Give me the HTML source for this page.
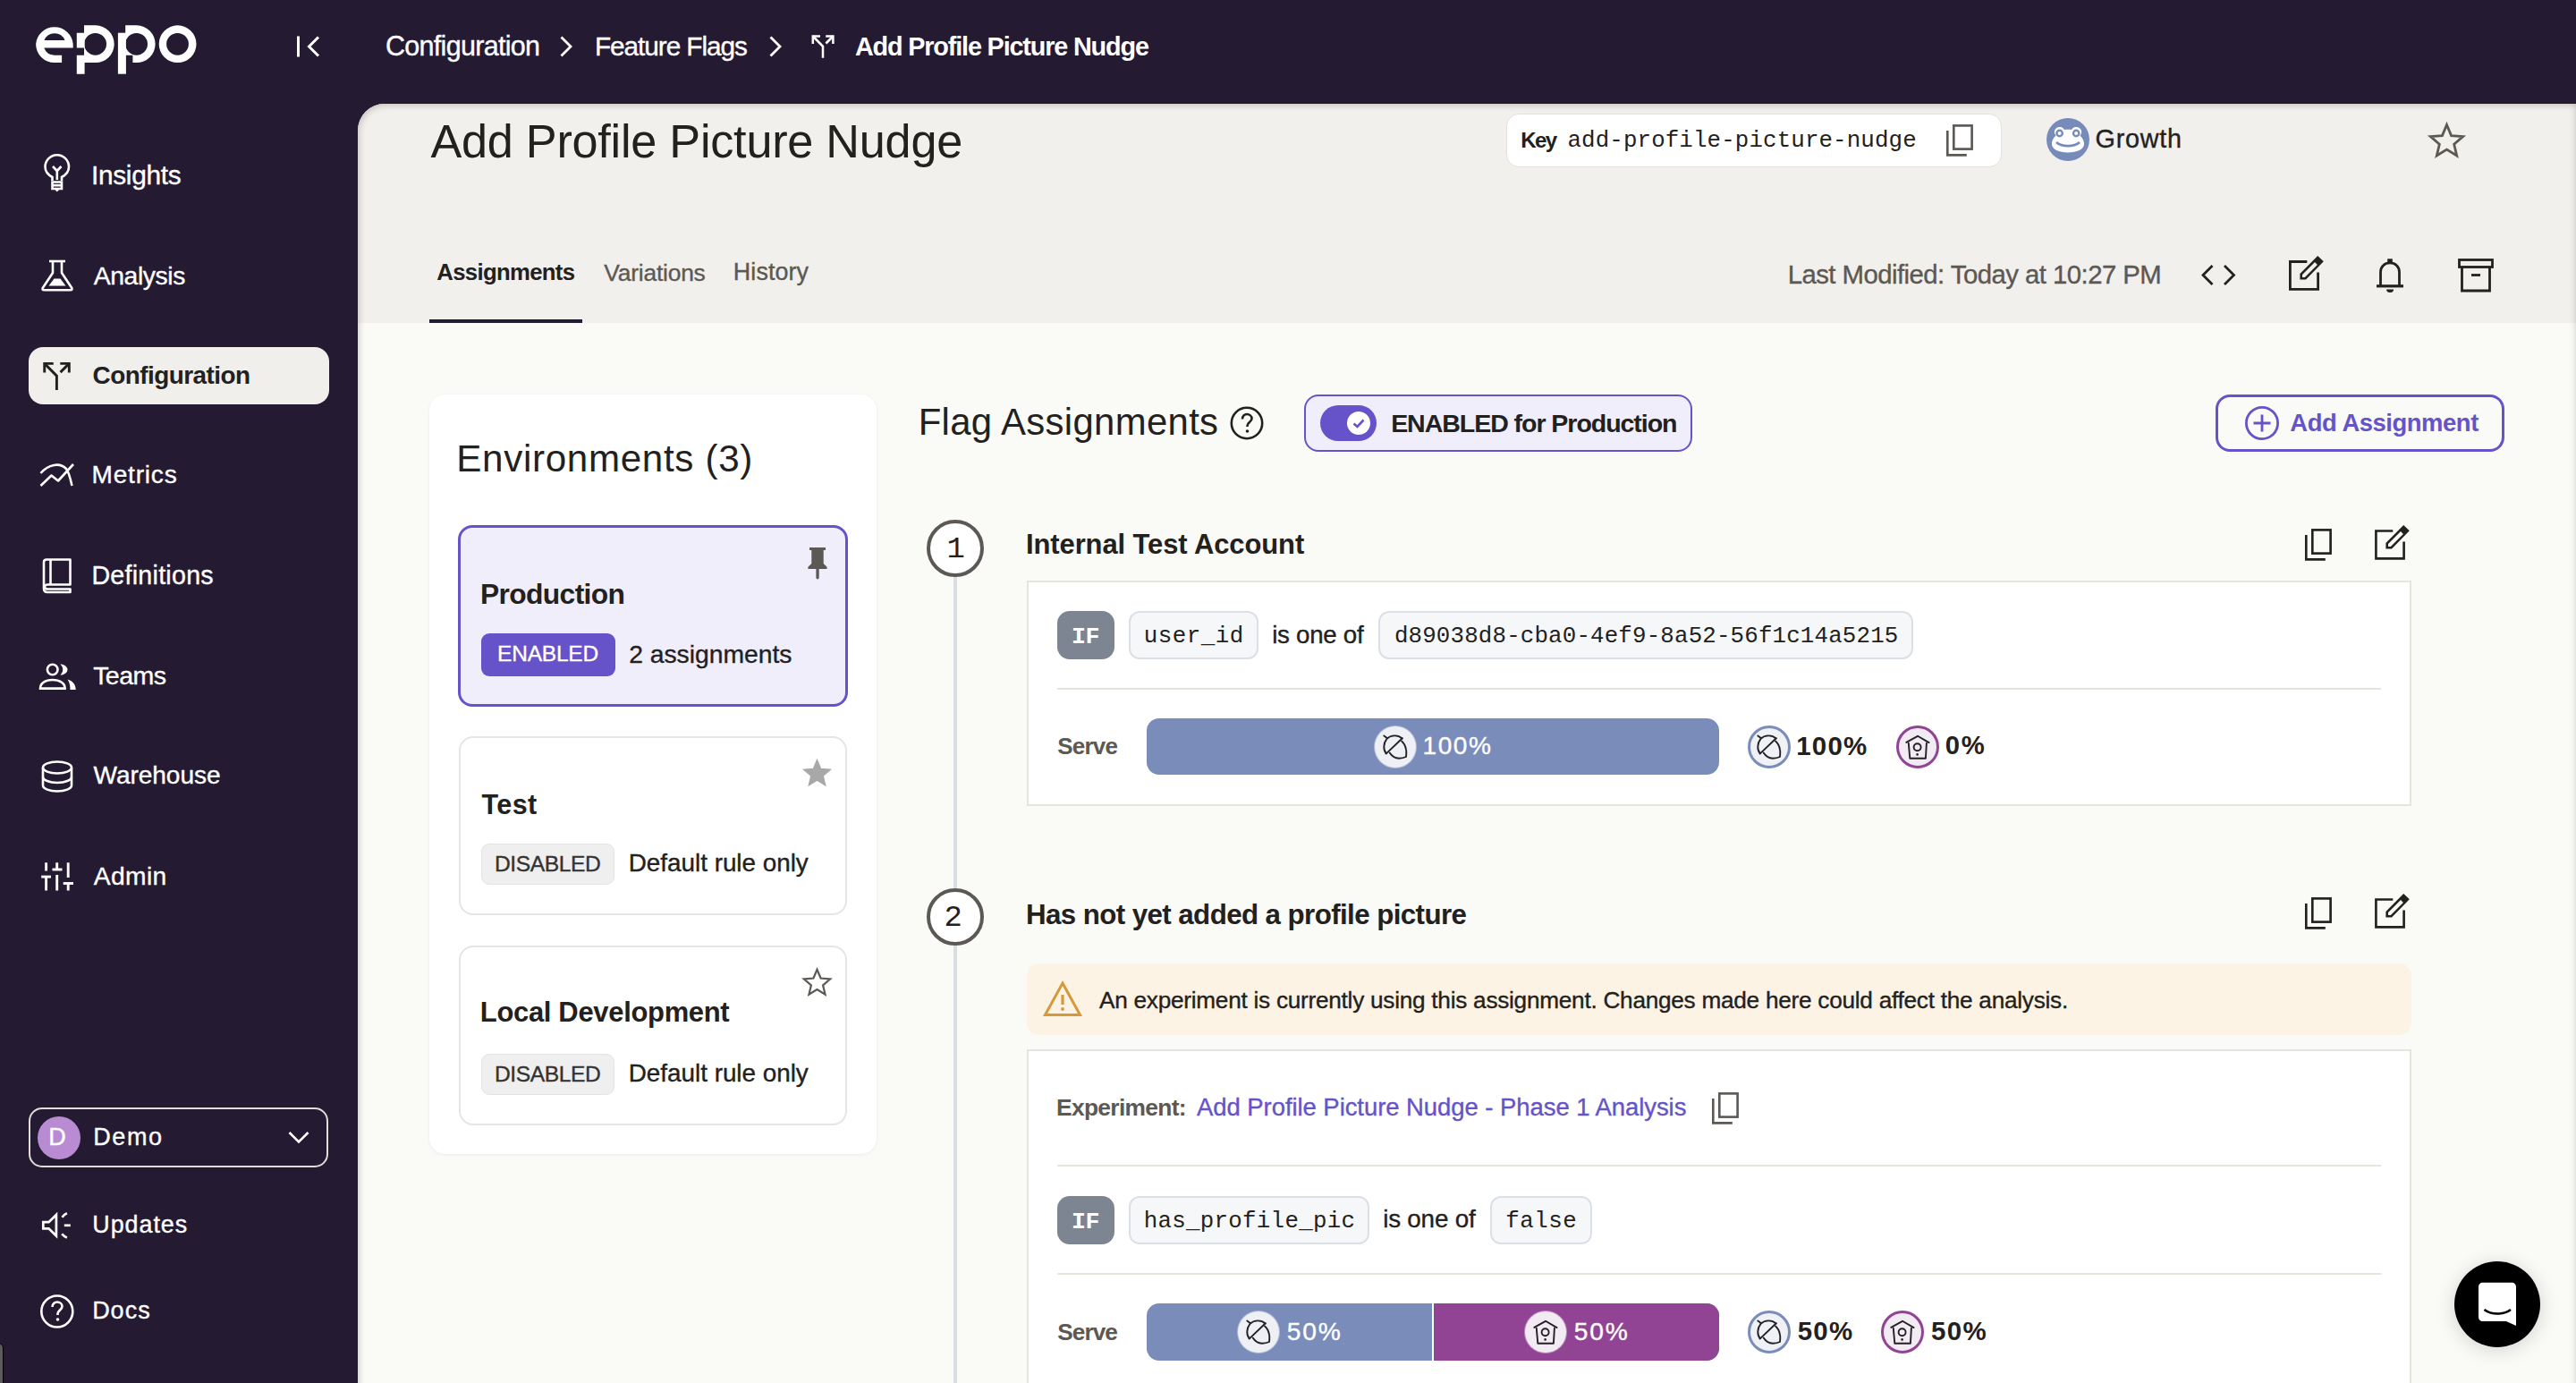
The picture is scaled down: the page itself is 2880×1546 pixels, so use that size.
<!DOCTYPE html>
<html><head><meta charset="utf-8"><title>Eppo</title>
<style>
html,body{margin:0;padding:0;}
body{width:2880px;height:1546px;background:#241b33;position:relative;overflow:hidden;font-family:"Liberation Sans",sans-serif;}
.b{position:absolute;}
.t{position:absolute;white-space:pre;line-height:1;}
svg.b{overflow:visible;}
</style></head><body>
<div class="b" style="left:400px;top:116px;width:2480px;height:1430px;background:#fafaf7;border-top-left-radius:30px;overflow:hidden;"></div><div class="b" style="left:400px;top:116px;width:2480px;height:245px;background:#f1f0ec;border-top-left-radius:30px;"></div>
<svg class="b" style="left:0px;top:0px;" width="240" height="100" viewBox="0 0 240 100">
<g fill="#fff">
<path d="M40.1 49.2 A20.9 20.9 0 0 1 81.7 49.2 L81.7 53.6 L49.3 53.6 A12.4 12.4 0 0 0 61 61.7 L69.1 61.7 L69.1 70.1 L61 70.1 A20.9 20.9 0 0 1 40.1 49.2 Z M49.5 45 L72.5 45 A12.4 12.4 0 0 0 49.5 45 Z" fill-rule="evenodd"/>
<path d="M85.8 36.7 L94.6 36.7 L94.6 53.6 L85.8 53.6 Z M85.8 61.7 L94.6 61.7 L94.6 82.7 L85.8 82.7 Z"/>
<path d="M94 28.3 L106.8 28.3 A20.9 20.9 0 0 1 106.8 70.1 L94 70.1 Z M106.6 36.9 A12.4 12.4 0 1 0 106.6 61.7 A12.4 12.4 0 1 0 106.6 36.9 Z" fill-rule="evenodd"/>
<path d="M131.9 36.7 L140.9 36.7 L140.9 82.7 L131.9 82.7 Z"/>
<path d="M140.2 28.3 L152.7 28.3 A20.9 20.9 0 0 1 152.7 70.1 L148.4 70.1 L148.4 61.8 L140.2 61.8 Z M152.6 36.9 A12.4 12.4 0 1 0 152.6 61.7 A12.4 12.4 0 1 0 152.6 36.9 Z" fill-rule="evenodd"/>
<path d="M198.6 28.3 A20.9 20.9 0 1 1 198.6 70.1 A20.9 20.9 0 1 1 198.6 28.3 Z M198.5 36.9 A12.4 12.4 0 1 0 198.5 61.7 A12.4 12.4 0 1 0 198.5 36.9 Z" fill-rule="evenodd"/>
</g></svg>
<svg class="b" style="left:320px;top:30px;" width="50" height="44" viewBox="0 0 50 44"><g stroke="#fff" stroke-width="3" fill="none"><path d="M13.5 10.5 V33.5"/><path d="M36 11.5 L25.5 22 L36 32.5"/></g></svg>
<div class="t" style="left:430.98px;top:36.19px;font-size:30.49px;font-family:'Liberation Sans', sans-serif;font-weight:400;color:#fff;letter-spacing:-0.688px;-webkit-text-stroke:0.35px currentColor;">Configuration</div>
<svg class="b" style="left:615px;top:30px;" width="40" height="44" viewBox="0 0 40 44"><path d="M12.5 11.5 L23 22 L12.5 32.5" stroke="#fff" stroke-width="2.8" fill="none"/></svg>
<div class="t" style="left:664.92px;top:36.81px;font-size:29.76px;font-family:'Liberation Sans', sans-serif;font-weight:400;color:#fff;letter-spacing:-1.041px;-webkit-text-stroke:0.35px currentColor;">Feature Flags</div>
<svg class="b" style="left:849px;top:30px;" width="40" height="44" viewBox="0 0 40 44"><path d="M12.5 11.5 L23 22 L12.5 32.5" stroke="#fff" stroke-width="2.8" fill="none"/></svg>
<svg class="b" style="left:900.00px;top:32.00px" width="40.00" height="40.00" viewBox="0 0 40 40"><g stroke="#fff" stroke-width="2.50" fill="none" stroke-linejoin="miter" stroke-linecap="butt">
<path d="M17 8.5 H8.8 V16.9"/>
<path d="M8.8 8.5 L20 19.8 V32.7"/>
<path d="M23.2 8.5 H31.4 V16.9"/>
<path d="M31.4 8.5 L23.4 16.5"/>
</g></svg>
<div class="t" style="left:955.88px;top:37.62px;font-size:28.81px;font-family:'Liberation Sans', sans-serif;font-weight:700;color:#fff;letter-spacing:-1.157px;">Add Profile Picture Nudge</div>
<div class="b" style="left:32px;top:388px;width:336px;height:64px;background:#f0efeb;border-radius:16px;"></div>
<div class="t" style="left:102.01px;top:180.73px;font-size:29.85px;font-family:'Liberation Sans', sans-serif;font-weight:400;color:#fff;letter-spacing:-0.313px;-webkit-text-stroke:0.35px currentColor;">Insights</div>
<div class="t" style="left:104.70px;top:294.03px;font-size:28.32px;font-family:'Liberation Sans', sans-serif;font-weight:400;color:#fff;letter-spacing:-0.385px;-webkit-text-stroke:0.35px currentColor;">Analysis</div>
<div class="t" style="left:103.58px;top:406.08px;font-size:27.91px;font-family:'Liberation Sans', sans-serif;font-weight:700;color:#222120;letter-spacing:-0.528px;">Configuration</div>
<div class="t" style="left:102.46px;top:517.25px;font-size:28.05px;font-family:'Liberation Sans', sans-serif;font-weight:400;color:#fff;letter-spacing:0.816px;-webkit-text-stroke:0.35px currentColor;">Metrics</div>
<div class="t" style="left:102.41px;top:629.06px;font-size:28.63px;font-family:'Liberation Sans', sans-serif;font-weight:400;color:#fff;letter-spacing:0.257px;-webkit-text-stroke:0.35px currentColor;">Definitions</div>
<div class="t" style="left:104.13px;top:741.02px;font-size:28.56px;font-family:'Liberation Sans', sans-serif;font-weight:400;color:#fff;letter-spacing:-0.561px;-webkit-text-stroke:0.35px currentColor;">Teams</div>
<div class="t" style="left:104.56px;top:853.12px;font-size:28.09px;font-family:'Liberation Sans', sans-serif;font-weight:400;color:#fff;letter-spacing:-0.068px;-webkit-text-stroke:0.35px currentColor;">Warehouse</div>
<div class="t" style="left:104.70px;top:964.93px;font-size:28.20px;font-family:'Liberation Sans', sans-serif;font-weight:400;color:#fff;letter-spacing:0.423px;-webkit-text-stroke:0.35px currentColor;">Admin</div>
<svg class="b" style="left:44px;top:172px;" width="40" height="46" viewBox="0 0 40 46"><g stroke="#fff" stroke-width="2.6" fill="none">
<path d="M14.5 30 V26 C9 23 6.5 19 6.5 14.5 A13.2 13.2 0 0 1 33 14.5 C33 19 30.5 23 25 26 V30"/>
<path d="M14.5 31.5 H25 V39 H14.5 Z"/><path d="M14.5 35.2 H25"/>
<path d="M15 14 L19.8 19 L24.5 14"/><path d="M19.8 19 V29"/>
</g><path d="M16.5 39 H23 L19.8 42.5 Z" fill="#fff"/></svg>
<svg class="b" style="left:42px;top:286px;" width="44" height="44" viewBox="0 0 44 44"><g stroke="#fff" stroke-width="2.6" fill="none" stroke-linejoin="round">
<path d="M13 6 H31"/><path d="M17 6 V19 L6 35.5 Q4.5 38.2 7.5 38.2 H36.5 Q39.5 38.2 38 35.5 L27 19 V6"/>
</g><path d="M12.5 33.5 L18.5 25.5 H25.5 L31.5 33.5 Z" fill="#fff"/></svg>
<svg class="b" style="left:39.33px;top:395.69px" width="48.80" height="48.80" viewBox="0 0 40 40"><g stroke="#222120" stroke-width="2.38" fill="none" stroke-linejoin="miter" stroke-linecap="butt">
<path d="M17 8.5 H8.8 V16.9"/>
<path d="M8.8 8.5 L20 19.8 V32.7"/>
<path d="M23.2 8.5 H31.4 V16.9"/>
<path d="M31.4 8.5 L23.4 16.5"/>
</g></svg>
<svg class="b" style="left:42px;top:514px;" width="44" height="34" viewBox="0 0 44 34"><g stroke="#fff" stroke-width="2.6" fill="none" stroke-linejoin="round">
<path d="M3.5 29 L15.5 17.5 L23 23.5 L40 5"/>
<path d="M3.5 15 C12 5 25 2.5 32 10 C34.5 13 36.5 20 38.5 29"/>
</g></svg>
<svg class="b" style="left:44px;top:621px;" width="40" height="46" viewBox="0 0 40 46"><g stroke="#fff" stroke-width="2.6" fill="none" stroke-linejoin="round">
<path d="M34.5 4.5 H8 C6 4.5 5 5.5 5 7.5 V37 C5 39.5 6.5 41 9 41 H34.5 V37.5 H9.5 C7.5 37.5 6 36.5 6 35 C6 33.5 7.5 32.5 9.5 32.5 H34.5 Z"/>
<path d="M12.5 4.5 V32.5"/>
</g></svg>
<svg class="b" style="left:40px;top:738px;" width="48" height="36" viewBox="0 0 48 36"><g stroke="#fff" stroke-width="2.6" fill="none">
<circle cx="18.7" cy="10.5" r="5.8"/>
<path d="M5 31.6 C5 25.5 11 22 18.7 22 C26.5 22 32.6 25.5 32.6 31.6 Z"/>
</g>
<path d="M27.4 4.4 C31.5 4.4 35.5 7 35.5 10.5 C35.5 14 31.5 16.6 27.4 16.6 C29.5 14.5 30.2 12.5 30.2 10.5 C30.2 8.5 29.5 6.5 27.4 4.4 Z" fill="#fff"/>
<path d="M35.5 21.6 C41 23 44.7 27 44.7 32.9 H38.5 C38.5 28 37.5 24 35.5 21.6 Z" fill="#fff"/></svg>
<svg class="b" style="left:42px;top:846px;" width="44" height="44" viewBox="0 0 44 44"><g stroke="#fff" stroke-width="2.6" fill="none">
<ellipse cx="22" cy="12" rx="16" ry="6.5"/>
<path d="M6 12 V32 C6 35.6 13 38.5 22 38.5 C31 38.5 38 35.6 38 32 V12"/>
<path d="M6 22.5 C6 26 13 29 22 29 C31 29 38 26 38 22.5"/>
</g></svg>
<svg class="b" style="left:42px;top:960px;" width="44" height="40" viewBox="0 0 44 40"><g stroke="#fff" stroke-width="2.9" fill="none">
<path d="M9.6 4.3 V13.5"/><path d="M4.2 20.1 H15"/><path d="M9.6 20 V35.5"/>
<path d="M21.7 4.3 V12"/><path d="M16.5 12 H27.5"/><path d="M21.7 18 V35.5"/>
<path d="M34.2 4.3 V21"/><path d="M28.7 27.5 H40"/><path d="M34.2 27 V35.5"/>
</g></svg>
<div class="b" style="left:32px;top:1238px;width:335px;height:67px;border:2px solid #e2ded7;border-radius:15px;box-sizing:border-box;"></div>
<div class="b" style="left:42px;top:1248px;width:48px;height:48px;background:#b98bd3;border-radius:50%;"></div>
<div class="t" style="left:54.24px;top:1257.71px;font-size:27.03px;font-family:'Liberation Sans', sans-serif;font-weight:400;color:#fff;letter-spacing:0.000px;-webkit-text-stroke:0.35px currentColor;">D</div>
<div class="t" style="left:104.24px;top:1257.71px;font-size:27.03px;font-family:'Liberation Sans', sans-serif;font-weight:400;color:#fff;letter-spacing:1.599px;-webkit-text-stroke:0.35px currentColor;">Demo</div>
<svg class="b" style="left:315px;top:1258px;" width="40" height="30" viewBox="0 0 40 30"><path d="M8.5 8 L19 18.5 L29.5 8" stroke="#fff" stroke-width="2.6" fill="none"/></svg>
<svg class="b" style="left:42px;top:1350px;" width="44" height="40" viewBox="0 0 44 40"><g stroke="#fff" stroke-width="2.7" fill="none" stroke-linejoin="miter">
<path d="M6.3 16.2 H12.5 L20.9 8 V31.5 L12.5 23.4 H6.3 Z"/>
<path d="M27.5 10.8 C28.7 9 30.5 7.2 32.9 6.2"/><path d="M29.8 19.8 H36.8"/><path d="M27.2 29.3 C28.7 31 30.5 32.5 32.9 33.4"/>
</g></svg>
<div class="t" style="left:103.28px;top:1355.74px;font-size:26.89px;font-family:'Liberation Sans', sans-serif;font-weight:400;color:#fff;letter-spacing:0.966px;-webkit-text-stroke:0.35px currentColor;">Updates</div>
<svg class="b" style="left:42px;top:1444px;" width="44" height="44" viewBox="0 0 44 44"><g stroke="#fff" stroke-width="2.6" fill="none">
<circle cx="21.8" cy="22" r="17.5"/>
<path d="M16.5 17 C16.5 13.5 19 11.5 22 11.5 C25 11.5 27.5 13.5 27.5 16.5 C27.5 20 22.5 21 22.5 24.5 V26"/>
</g><circle cx="22.5" cy="31" r="1.8" fill="#fff"/></svg>
<div class="t" style="left:103.14px;top:1451.71px;font-size:27.03px;font-family:'Liberation Sans', sans-serif;font-weight:400;color:#fff;letter-spacing:0.990px;-webkit-text-stroke:0.35px currentColor;">Docs</div>
<div class="t" style="left:481.40px;top:131.58px;font-size:52.23px;font-family:'Liberation Sans', sans-serif;font-weight:400;color:#222120;letter-spacing:-0.250px;">Add Profile Picture Nudge</div>
<div class="t" style="left:488.36px;top:292.22px;font-size:25.73px;font-family:'Liberation Sans', sans-serif;font-weight:700;color:#222120;letter-spacing:-0.690px;">Assignments</div>
<div class="t" style="left:675.37px;top:291.64px;font-size:26.42px;font-family:'Liberation Sans', sans-serif;font-weight:400;color:#5c5853;letter-spacing:-0.224px;-webkit-text-stroke:0.35px currentColor;">Variations</div>
<div class="t" style="left:819.85px;top:291.24px;font-size:26.89px;font-family:'Liberation Sans', sans-serif;font-weight:400;color:#5c5853;letter-spacing:0.087px;-webkit-text-stroke:0.35px currentColor;">History</div>
<div class="b" style="left:480px;top:357px;width:171px;height:4px;background:#231a33;"></div>
<div class="b" style="left:1684px;top:127px;width:554px;height:60px;background:#fff;border:1px solid #e4e1db;border-radius:14px;box-sizing:border-box;"></div>
<div class="t" style="left:1700.13px;top:144.57px;font-size:24.14px;font-family:'Liberation Sans', sans-serif;font-weight:700;color:#222120;letter-spacing:-1.650px;">Key</div>
<div class="t" style="left:1752.45px;top:145.22px;font-size:25.80px;font-family:'Liberation Mono', monospace;font-weight:400;color:#222120;letter-spacing:0.134px;">add-profile-picture-nudge</div>
<svg class="b" style="left:2175px;top:138px;" width="32" height="38" viewBox="0 0 32 38"><g stroke="#5c5853" stroke-width="2.64" fill="none" stroke-linecap="butt">
<rect x="9.3" y="2.4" width="20.3" height="26.2"/>
<path d="M2.3 8.1 V35.4 H23.8"/>
</g></svg>
<svg class="b" style="left:2288px;top:132px;" width="48" height="48" viewBox="0 0 48 48"><circle cx="24" cy="24" r="24" fill="#778bbb"/>
<path d="M6 29 C6 24 9 21 10.5 19.5 C9 18 8.5 16 9 14 C10 10.5 13.5 9.5 16 10 C18 10.5 19.5 12 20 13 C22.5 12.5 25.5 12.5 28 13 C28.5 12 30 10.5 32 10 C34.5 9.5 38 10.5 39 14 C39.5 16 39 18 37.5 19.5 C39 21 42 24 42 29 C42 35 34 38.5 24 38.5 C14 38.5 6 35 6 29 Z" fill="#fff"/>
<circle cx="14.6" cy="17" r="3.2" fill="none" stroke="#778bbb" stroke-width="2.4"/>
<circle cx="33.2" cy="17" r="3.2" fill="none" stroke="#778bbb" stroke-width="2.4"/>
<path d="M11 27 C17 32.5 31 32.5 37 27" fill="none" stroke="#778bbb" stroke-width="2.8"/></svg>
<div class="t" style="left:2342.56px;top:140.65px;font-size:28.76px;font-family:'Liberation Sans', sans-serif;font-weight:400;color:#222120;letter-spacing:0.740px;-webkit-text-stroke:0.35px currentColor;">Growth</div>
<svg class="b" style="left:2715px;top:136px;" width="41" height="41" viewBox="0 0 41 41"><polygon points="20.50,3.45 25.55,15.60 38.67,16.65 28.67,25.21 31.73,38.00 20.50,31.15 9.27,38.00 12.33,25.21 2.33,16.65 15.45,15.60" fill="none" stroke="#5c5853" stroke-width="2.8" stroke-linejoin="miter"/></svg>
<div class="t" style="left:1998.65px;top:292.16px;font-size:29.34px;font-family:'Liberation Sans', sans-serif;font-weight:400;color:#5c5853;letter-spacing:-0.537px;-webkit-text-stroke:0.35px currentColor;">Last Modified: Today at 10:27 PM</div>
<svg class="b" style="left:2455px;top:290px;" width="50" height="36" viewBox="0 0 50 36"><g stroke="#222120" stroke-width="2.8" fill="none"><path d="M18.5 7 L8 17.5 L18.5 28"/><path d="M32 7 L42.5 17.5 L32 28"/></g></svg>
<svg class="b" style="left:2558px;top:285px" width="42.0" height="42.0" viewBox="0 0 42 42"><g stroke="#222120" stroke-width="2.80" fill="none" stroke-linecap="butt">
<path d="M21.3 7.5 H2.4 V38.4 H33.6 V19.6"/>
</g><path d="M13.4 21 L33.2 1.1 L39.8 7.3 L20 27.5 H13.4 Z M16 22.1 V25 H18.9 L32.9 11 L30 8.1 Z" fill="#222120" fill-rule="evenodd"/></svg>
<svg class="b" style="left:2650px;top:286px;" width="46" height="44" viewBox="0 0 46 44"><rect x="19.2" y="3.3" width="5.6" height="4.6" fill="#222120"/>
<path d="M11.5 33 V18.5 C11.5 12 16 7.9 22 7.9 C28 7.9 32.5 12 32.5 18.5 V33" stroke="#222120" stroke-width="2.8" fill="none"/>
<rect x="7" y="32.2" width="30" height="3.2" fill="#222120"/>
<path d="M18 37.5 H26.2 C26 40 24.5 41 22.1 41 C19.7 41 18.2 40 18 37.5 Z" fill="#222120"/></svg>
<svg class="b" style="left:2744px;top:286px;" width="48" height="44" viewBox="0 0 48 44"><g stroke="#222120" stroke-width="2.8" fill="none">
<rect x="5.5" y="4.5" width="37" height="8"/>
<path d="M8.5 12.5 V39 H39.5 V12.5"/>
<path d="M19 21.5 H29"/>
</g></svg>
<div class="b" style="left:480px;top:441px;width:500px;height:849px;background:#fff;border-radius:18px;box-shadow:0 1px 4px rgba(0,0,0,0.06);"></div>
<div class="t" style="left:510.23px;top:492.32px;font-size:42.15px;font-family:'Liberation Sans', sans-serif;font-weight:400;color:#222120;letter-spacing:0.682px;">Environments (3)</div>
<div class="b" style="left:512px;top:587px;width:436px;height:203px;background:#f1eefc;border:3.6px solid #6753c9;border-radius:16px;box-sizing:border-box;"></div>
<div class="t" style="left:536.94px;top:648.73px;font-size:31.75px;font-family:'Liberation Sans', sans-serif;font-weight:700;color:#222120;letter-spacing:-0.610px;">Production</div>
<div class="b" style="left:538px;top:708px;width:150px;height:48px;background:#6753c9;border-radius:9px;"></div>
<div class="t" style="left:556.04px;top:719.29px;font-size:24.47px;font-family:'Liberation Sans', sans-serif;font-weight:400;color:#fff;letter-spacing:-0.181px;-webkit-text-stroke:0.35px currentColor;">ENABLED</div>
<div class="t" style="left:703.18px;top:717.03px;font-size:28.31px;font-family:'Liberation Sans', sans-serif;font-weight:400;color:#222120;letter-spacing:-0.017px;-webkit-text-stroke:0.35px currentColor;">2 assignments</div>
<svg class="b" style="left:896px;top:606px;" width="36" height="46" viewBox="0 0 36 46"><g fill="#5c5853">
<path d="M9 6 H27 V8.9 H24.7 V24 L28.5 27.8 V29.9 H7.4 V27.8 L11.3 24 V8.9 H9 Z"/>
<path d="M16.4 29.5 H19.7 V40.2 L18 41.8 L16.4 40.2 Z"/>
</g></svg>
<div class="b" style="left:513px;top:823px;width:434px;height:200px;background:#fff;border:2px solid #e5e5e5;border-radius:16px;box-sizing:border-box;"></div>
<div class="t" style="left:538.49px;top:883.66px;font-size:30.52px;font-family:'Liberation Sans', sans-serif;font-weight:700;color:#222120;letter-spacing:0.425px;">Test</div>
<div class="b" style="left:538px;top:943px;width:149px;height:46px;background:#efefef;border:1.5px solid #e3e3e3;border-radius:9px;box-sizing:border-box;"></div>
<div class="t" style="left:553.03px;top:953.74px;font-size:24.64px;font-family:'Liberation Sans', sans-serif;font-weight:400;color:#333;letter-spacing:-0.437px;-webkit-text-stroke:0.35px currentColor;">DISABLED</div>
<div class="t" style="left:702.77px;top:951.01px;font-size:27.87px;font-family:'Liberation Sans', sans-serif;font-weight:400;color:#222120;letter-spacing:-0.019px;-webkit-text-stroke:0.35px currentColor;">Default rule only</div>
<svg class="b" style="left:897px;top:847px;" width="33" height="33" viewBox="0 0 33 33"><polygon points="16.50,2.25 20.71,12.36 31.62,13.24 23.30,20.36 25.85,31.01 16.50,25.30 7.15,31.01 9.70,20.36 1.38,13.24 12.29,12.36" fill="#a8a8a8" stroke="#a8a8a8" stroke-width="1.2" stroke-linejoin="miter"/></svg>
<div class="b" style="left:513px;top:1057px;width:434px;height:201px;background:#fff;border:2px solid #e5e5e5;border-radius:16px;box-sizing:border-box;"></div>
<div class="t" style="left:536.79px;top:1117.08px;font-size:30.97px;font-family:'Liberation Sans', sans-serif;font-weight:700;color:#222120;letter-spacing:-0.316px;">Local Development</div>
<div class="b" style="left:538px;top:1178px;width:149px;height:46px;background:#efefef;border:1.5px solid #e3e3e3;border-radius:9px;box-sizing:border-box;"></div>
<div class="t" style="left:553.03px;top:1188.64px;font-size:24.64px;font-family:'Liberation Sans', sans-serif;font-weight:400;color:#333;letter-spacing:-0.437px;-webkit-text-stroke:0.35px currentColor;">DISABLED</div>
<div class="t" style="left:702.77px;top:1185.91px;font-size:27.87px;font-family:'Liberation Sans', sans-serif;font-weight:400;color:#222120;letter-spacing:-0.019px;-webkit-text-stroke:0.35px currentColor;">Default rule only</div>
<svg class="b" style="left:897px;top:1081px;" width="33" height="33" viewBox="0 0 33 33"><polygon points="16.50,2.75 20.57,12.54 31.15,13.39 23.09,20.29 25.55,30.61 16.50,25.08 7.45,30.61 9.91,20.29 1.85,13.39 12.43,12.54" fill="none" stroke="#5c5853" stroke-width="2.2" stroke-linejoin="miter"/></svg>
<div class="t" style="left:1026.65px;top:451.37px;font-size:41.86px;font-family:'Liberation Sans', sans-serif;font-weight:400;color:#222120;letter-spacing:0.335px;">Flag Assignments</div>
<svg class="b" style="left:1372px;top:451px;" width="44" height="44" viewBox="0 0 44 44"><circle cx="22" cy="22" r="17.2" stroke="#222120" stroke-width="2.6" fill="none"/>
<path d="M17 17.5 C17 14 19.5 12 22 12 C25 12 27.5 14 27.5 17 C27.5 20.5 22.5 21 22.5 25 V26" stroke="#222120" stroke-width="2.6" fill="none"/>
<circle cx="22.5" cy="31" r="1.8" fill="#222120"/></svg>
<div class="b" style="left:1458px;top:441px;width:434px;height:64px;background:#f1eefc;border:2.5px solid #6753c9;border-radius:16px;box-sizing:border-box;"></div>
<div class="b" style="left:1476px;top:453px;width:63px;height:40px;background:#6753c9;border-radius:20px;"></div>
<svg class="b" style="left:1506px;top:460px;" width="26" height="26" viewBox="0 0 26 26"><circle cx="13" cy="13" r="13" fill="#fff"/><path d="M7.5 13.5 L11.5 17 L18.5 9.5" stroke="#6753c9" stroke-width="2.6" fill="none"/></svg>
<div class="t" style="left:1555.14px;top:458.84px;font-size:28.54px;font-family:'Liberation Sans', sans-serif;font-weight:700;color:#222120;letter-spacing:-1.046px;">ENABLED for Production</div>
<div class="b" style="left:2477px;top:441px;width:323px;height:64px;border:3.5px solid #6753c9;border-radius:16px;box-sizing:border-box;"></div>
<svg class="b" style="left:2508px;top:452px;" width="42" height="42" viewBox="0 0 42 42"><g stroke="#6753c9" stroke-width="2.8" fill="none"><circle cx="21" cy="21" r="17.6"/><path d="M21 11.5 V30.5 M11.5 21 H30.5"/></g></svg>
<div class="t" style="left:2560.31px;top:458.68px;font-size:27.43px;font-family:'Liberation Sans', sans-serif;font-weight:700;color:#6753c9;letter-spacing:-0.452px;">Add Assignment</div>
<div class="b" style="left:1066px;top:640px;width:4px;height:906px;background:#d9dee4;"></div>
<div class="b" style="left:1036px;top:581px;width:64px;height:64px;background:#fff;border:4.5px solid #5c5853;border-radius:50%;box-sizing:border-box;"></div>
<div class="t" style="left:1058.42px;top:597.99px;font-size:33.94px;font-family:'Liberation Mono', monospace;font-weight:400;color:#222120;letter-spacing:0.000px;">1</div>
<div class="t" style="left:1146.99px;top:593.81px;font-size:30.94px;font-family:'Liberation Sans', sans-serif;font-weight:700;color:#222120;letter-spacing:-0.081px;">Internal Test Account</div>
<svg class="b" style="left:2576px;top:590px;" width="32" height="38" viewBox="0 0 32 38"><g stroke="#222120" stroke-width="2.64" fill="none" stroke-linecap="butt">
<rect x="9.3" y="2.4" width="20.3" height="26.2"/>
<path d="M2.3 8.1 V35.4 H23.8"/>
</g></svg>
<svg class="b" style="left:2654px;top:586px" width="42.0" height="42.0" viewBox="0 0 42 42"><g stroke="#222120" stroke-width="2.64" fill="none" stroke-linecap="butt">
<path d="M21.3 7.5 H2.4 V38.4 H33.6 V19.6"/>
</g><path d="M13.4 21 L33.2 1.1 L39.8 7.3 L20 27.5 H13.4 Z M16 22.1 V25 H18.9 L32.9 11 L30 8.1 Z" fill="#222120" fill-rule="evenodd"/></svg>
<div class="b" style="left:1148px;top:649px;width:1548px;height:252px;background:#fff;border:2px solid #e7e4de;box-sizing:border-box;"></div>
<div class="b" style="left:1182px;top:683px;width:64px;height:54px;background:#7c8591;border-radius:14px;"></div>
<div class="t" style="left:1198.01px;top:698.65px;font-size:26.55px;font-family:'Liberation Mono', monospace;font-weight:700;color:#fff;letter-spacing:-0.473px;">IF</div>
<div class="b" style="left:1262px;top:683px;width:145px;height:54px;background:#f6f7f9;border:2px solid #dbe0e6;border-radius:12px;box-sizing:border-box;"></div>
<div class="t" style="left:1278.68px;top:699.22px;font-size:25.80px;font-family:'Liberation Mono', monospace;font-weight:400;color:#222120;letter-spacing:0.547px;">user_id</div>
<div class="t" style="left:1422.20px;top:695.54px;font-size:27.71px;font-family:'Liberation Sans', sans-serif;font-weight:400;color:#222120;letter-spacing:-0.286px;-webkit-text-stroke:0.35px currentColor;">is one of</div>
<div class="b" style="left:1541px;top:683px;width:598px;height:54px;background:#f6f7f9;border:2px solid #dbe0e6;border-radius:12px;box-sizing:border-box;"></div>
<div class="t" style="left:1558.92px;top:699.22px;font-size:25.80px;font-family:'Liberation Mono', monospace;font-weight:400;color:#222120;letter-spacing:0.173px;">d89038d8-cba0-4ef9-8a52-56f1c14a5215</div>
<div class="b" style="left:1182px;top:769px;width:1480px;height:2px;background:#e7e4de;"></div>
<div class="t" style="left:1182.22px;top:821.72px;font-size:25.97px;font-family:'Liberation Sans', sans-serif;font-weight:700;color:#5c5853;letter-spacing:-0.769px;">Serve</div>
<div class="b" style="left:1282px;top:803px;width:640px;height:63px;background:#7a8cba;border-radius:14px;"></div>
<div class="b" style="left:1537px;top:811.6px;width:46px;height:46px;border-radius:50%;background:#eef0f6;box-shadow:0 0 0 1px rgba(255,255,255,0.4);"></div>
<svg class="b" style="left:1544px;top:818.6px;" width="32" height="32" viewBox="0 0 32 32"><g stroke="#222" stroke-width="1.9" fill="none" stroke-linejoin="round" stroke-linecap="round">
<path d="M3.3 3.4 L6.7 6"/>
<path d="M5.6 23 C2.5 19.5 2.3 12 6.5 6.8 C11 2.5 19 2 23.6 6.5"/>
<path d="M5.6 23.6 L23.8 6.2"/>
<path d="M9.7 22.6 C12.5 27 16 28.7 20 28.7 C23 28.7 26 28 28 27 C28.3 24 28.5 21 28 18.9 C27.3 15 25.5 11.5 23.1 9.5"/>
</g></svg>
<div class="t" style="left:1590.60px;top:819.75px;font-size:28.05px;font-family:'Liberation Sans', sans-serif;font-weight:400;color:#fff;letter-spacing:1.524px;-webkit-text-stroke:0.35px currentColor;">100%</div>
<div class="b" style="left:1953.7px;top:810.6px;width:48.0px;height:48.0px;background:#eff1f6;border:3px solid #7a8cba;border-radius:50%;box-sizing:border-box;"></div>
<svg class="b" style="left:1961.7px;top:818.6px;" width="32" height="32" viewBox="0 0 32 32"><g stroke="#222" stroke-width="1.9" fill="none" stroke-linejoin="round" stroke-linecap="round">
<path d="M3.3 3.4 L6.7 6"/>
<path d="M5.6 23 C2.5 19.5 2.3 12 6.5 6.8 C11 2.5 19 2 23.6 6.5"/>
<path d="M5.6 23.6 L23.8 6.2"/>
<path d="M9.7 22.6 C12.5 27 16 28.7 20 28.7 C23 28.7 26 28 28 27 C28.3 24 28.5 21 28 18.9 C27.3 15 25.5 11.5 23.1 9.5"/>
</g></svg>
<div class="t" style="left:2008.23px;top:818.57px;font-size:29.45px;font-family:'Liberation Sans', sans-serif;font-weight:700;color:#222120;letter-spacing:1.207px;">100%</div>
<div class="b" style="left:2120px;top:810.6px;width:48px;height:48.0px;background:#f3ebf3;border:3px solid #914494;border-radius:50%;box-sizing:border-box;"></div>
<svg class="b" style="left:2128px;top:818.6px;" width="32" height="32" viewBox="0 0 32 32"><g stroke="#222" stroke-width="1.9" fill="none" stroke-linejoin="round" stroke-linecap="round">
<path d="M3.3 10.9 L16 3.8 L28.6 11.1"/>
<path d="M5.8 11.8 L7.3 28.7 H24.9 L25.9 11.8"/>
<circle cx="15.6" cy="16.2" r="4"/>
</g><circle cx="15.6" cy="24.4" r="1.3" fill="#222"/></svg>
<div class="t" style="left:2174.83px;top:818.77px;font-size:29.22px;font-family:'Liberation Sans', sans-serif;font-weight:700;color:#222120;letter-spacing:1.677px;">0%</div>
<div class="b" style="left:1036px;top:992.7px;width:64px;height:64.0px;background:#fff;border:4.5px solid #5c5853;border-radius:50%;box-sizing:border-box;"></div>
<div class="t" style="left:1055.62px;top:1009.69px;font-size:33.94px;font-family:'Liberation Mono', monospace;font-weight:400;color:#222120;letter-spacing:0.000px;">2</div>
<div class="t" style="left:1146.97px;top:1006.51px;font-size:31.29px;font-family:'Liberation Sans', sans-serif;font-weight:700;color:#222120;letter-spacing:-0.582px;">Has not yet added a profile picture</div>
<svg class="b" style="left:2576px;top:1002px;" width="32" height="38" viewBox="0 0 32 38"><g stroke="#222120" stroke-width="2.64" fill="none" stroke-linecap="butt">
<rect x="9.3" y="2.4" width="20.3" height="26.2"/>
<path d="M2.3 8.1 V35.4 H23.8"/>
</g></svg>
<svg class="b" style="left:2654px;top:998px" width="42.0" height="42.0" viewBox="0 0 42 42"><g stroke="#222120" stroke-width="2.64" fill="none" stroke-linecap="butt">
<path d="M21.3 7.5 H2.4 V38.4 H33.6 V19.6"/>
</g><path d="M13.4 21 L33.2 1.1 L39.8 7.3 L20 27.5 H13.4 Z M16 22.1 V25 H18.9 L32.9 11 L30 8.1 Z" fill="#222120" fill-rule="evenodd"/></svg>
<div class="b" style="left:1148px;top:1077px;width:1548px;height:80px;background:#fcf3e4;border-radius:14px;"></div>
<svg class="b" style="left:1162px;top:1092px;" width="52" height="48" viewBox="0 0 52 48"><path d="M26 7 L45.5 42.5 H6.5 Z" stroke="#d6993a" stroke-width="3" fill="none" stroke-linejoin="miter"/>
<path d="M26 20 V31" stroke="#d6993a" stroke-width="3.2"/><circle cx="26" cy="36" r="1.9" fill="#d6993a"/></svg>
<div class="t" style="left:1229.00px;top:1104.64px;font-size:26.18px;font-family:'Liberation Sans', sans-serif;font-weight:400;color:#222120;letter-spacing:-0.252px;-webkit-text-stroke:0.35px currentColor;">An experiment is currently using this assignment. Changes made here could affect the analysis.</div>
<div class="b" style="left:1148px;top:1173px;width:1548px;height:427px;background:#fff;border:2px solid #e7e4de;box-sizing:border-box;"></div>
<div class="t" style="left:1180.99px;top:1225.08px;font-size:26.36px;font-family:'Liberation Sans', sans-serif;font-weight:700;color:#5c5853;letter-spacing:-0.672px;">Experiment:</div>
<div class="t" style="left:1338.00px;top:1224.13px;font-size:27.49px;font-family:'Liberation Sans', sans-serif;font-weight:400;color:#6753c9;letter-spacing:-0.060px;-webkit-text-stroke:0.35px currentColor;">Add Profile Picture Nudge - Phase 1 Analysis</div>
<svg class="b" style="left:1913px;top:1220px;" width="32" height="38" viewBox="0 0 32 38"><g stroke="#5c5853" stroke-width="2.6" fill="none" stroke-linecap="butt">
<rect x="9.3" y="2.4" width="20.3" height="26.2"/>
<path d="M2.3 8.1 V35.4 H23.8"/>
</g></svg>
<div class="b" style="left:1182px;top:1302px;width:1480px;height:2px;background:#e7e4de;"></div>
<div class="b" style="left:1182px;top:1337px;width:64px;height:54px;background:#7c8591;border-radius:14px;"></div>
<div class="t" style="left:1198.01px;top:1352.65px;font-size:26.55px;font-family:'Liberation Mono', monospace;font-weight:700;color:#fff;letter-spacing:-0.473px;">IF</div>
<div class="b" style="left:1262px;top:1337px;width:269px;height:54px;background:#f6f7f9;border:2px solid #dbe0e6;border-radius:12px;box-sizing:border-box;"></div>
<div class="t" style="left:1278.68px;top:1353.22px;font-size:25.80px;font-family:'Liberation Mono', monospace;font-weight:400;color:#222120;letter-spacing:0.290px;">has_profile_pic</div>
<div class="t" style="left:1546.19px;top:1349.42px;font-size:27.85px;font-family:'Liberation Sans', sans-serif;font-weight:400;color:#222120;letter-spacing:-0.225px;-webkit-text-stroke:0.35px currentColor;">is one of</div>
<div class="b" style="left:1666px;top:1337px;width:114px;height:54px;background:#f6f7f9;border:2px solid #dbe0e6;border-radius:12px;box-sizing:border-box;"></div>
<div class="t" style="left:1683.32px;top:1353.22px;font-size:25.80px;font-family:'Liberation Mono', monospace;font-weight:400;color:#222120;letter-spacing:0.488px;">false</div>
<div class="b" style="left:1182px;top:1423px;width:1480px;height:2px;background:#e7e4de;"></div>
<div class="t" style="left:1182.21px;top:1475.64px;font-size:26.18px;font-family:'Liberation Sans', sans-serif;font-weight:700;color:#5c5853;letter-spacing:-0.907px;">Serve</div>
<div class="b" style="left:1282px;top:1457px;width:640px;height:64px;background:#7a8cba;border-radius:14px;"></div>
<div class="b" style="left:1603px;top:1457px;width:319px;height:64px;background:#914494;border-top-right-radius:14px;border-bottom-right-radius:14px;"></div>
<div class="b" style="left:1601px;top:1457px;width:2px;height:64px;background:#fff;"></div>
<div class="b" style="left:1384px;top:1466px;width:46px;height:46px;border-radius:50%;background:#eef0f6;box-shadow:0 0 0 1px rgba(255,255,255,0.4);"></div>
<svg class="b" style="left:1391px;top:1473px;" width="32" height="32" viewBox="0 0 32 32"><g stroke="#222" stroke-width="1.9" fill="none" stroke-linejoin="round" stroke-linecap="round">
<path d="M3.3 3.4 L6.7 6"/>
<path d="M5.6 23 C2.5 19.5 2.3 12 6.5 6.8 C11 2.5 19 2 23.6 6.5"/>
<path d="M5.6 23.6 L23.8 6.2"/>
<path d="M9.7 22.6 C12.5 27 16 28.7 20 28.7 C23 28.7 26 28 28 27 C28.3 24 28.5 21 28 18.9 C27.3 15 25.5 11.5 23.1 9.5"/>
</g></svg>
<div class="t" style="left:1438.67px;top:1473.93px;font-size:28.20px;font-family:'Liberation Sans', sans-serif;font-weight:400;color:#fff;letter-spacing:1.860px;-webkit-text-stroke:0.35px currentColor;">50%</div>
<div class="b" style="left:1705px;top:1466px;width:46px;height:46px;border-radius:50%;background:#f3ebf3;box-shadow:0 0 0 1px rgba(255,255,255,0.4);"></div>
<svg class="b" style="left:1712px;top:1473px;" width="32" height="32" viewBox="0 0 32 32"><g stroke="#222" stroke-width="1.9" fill="none" stroke-linejoin="round" stroke-linecap="round">
<path d="M3.3 10.9 L16 3.8 L28.6 11.1"/>
<path d="M5.8 11.8 L7.3 28.7 H24.9 L25.9 11.8"/>
<circle cx="15.6" cy="16.2" r="4"/>
</g><circle cx="15.6" cy="24.4" r="1.3" fill="#222"/></svg>
<div class="t" style="left:1759.67px;top:1473.93px;font-size:28.20px;font-family:'Liberation Sans', sans-serif;font-weight:400;color:#fff;letter-spacing:1.810px;-webkit-text-stroke:0.35px currentColor;">50%</div>
<div class="b" style="left:1954px;top:1465px;width:48px;height:48px;background:#eff1f6;border:3px solid #7a8cba;border-radius:50%;box-sizing:border-box;"></div>
<svg class="b" style="left:1962px;top:1473px;" width="32" height="32" viewBox="0 0 32 32"><g stroke="#222" stroke-width="1.9" fill="none" stroke-linejoin="round" stroke-linecap="round">
<path d="M3.3 3.4 L6.7 6"/>
<path d="M5.6 23 C2.5 19.5 2.3 12 6.5 6.8 C11 2.5 19 2 23.6 6.5"/>
<path d="M5.6 23.6 L23.8 6.2"/>
<path d="M9.7 22.6 C12.5 27 16 28.7 20 28.7 C23 28.7 26 28 28 27 C28.3 24 28.5 21 28 18.9 C27.3 15 25.5 11.5 23.1 9.5"/>
</g></svg>
<div class="t" style="left:2009.72px;top:1472.90px;font-size:29.42px;font-family:'Liberation Sans', sans-serif;font-weight:700;color:#222120;letter-spacing:1.240px;">50%</div>
<div class="b" style="left:2103px;top:1465px;width:48px;height:48px;background:#f3ebf3;border:3px solid #914494;border-radius:50%;box-sizing:border-box;"></div>
<svg class="b" style="left:2111px;top:1473px;" width="32" height="32" viewBox="0 0 32 32"><g stroke="#222" stroke-width="1.9" fill="none" stroke-linejoin="round" stroke-linecap="round">
<path d="M3.3 10.9 L16 3.8 L28.6 11.1"/>
<path d="M5.8 11.8 L7.3 28.7 H24.9 L25.9 11.8"/>
<circle cx="15.6" cy="16.2" r="4"/>
</g><circle cx="15.6" cy="24.4" r="1.3" fill="#222"/></svg>
<div class="t" style="left:2159.12px;top:1472.85px;font-size:29.47px;font-family:'Liberation Sans', sans-serif;font-weight:700;color:#222120;letter-spacing:1.292px;">50%</div>
<div class="b" style="left:-10px;top:1501px;width:12px;height:99px;background:#5b5b5b;border:1px solid #000;border-radius:6px;"></div>
<div class="b" style="left:2744px;top:1410px;width:96px;height:96px;background:#000;border-radius:50%;box-shadow:0 3px 22px rgba(0,0,0,0.16);"></div>
<svg class="b" style="left:2768px;top:1430px;" width="50" height="56" viewBox="0 0 50 56"><path d="M8 3.8 H40 C43 3.8 45 5.8 45 8.8 V52 L34 47 H8 C5 47 3 45 3 42 V8.8 C3 5.8 5 3.8 8 3.8 Z" fill="#fff"/>
<path d="M9.5 34 C17 40 31 40 39 34" stroke="#000" stroke-width="2.6" fill="none"/></svg>
<div class="b" style="left:400px;top:116px;width:2480px;height:1504px;border-top-left-radius:30px;box-shadow:inset 2px 2px 7px rgba(0,0,0,0.16), inset -3px 0 6px rgba(0,0,0,0.06);"></div>
</body></html>
